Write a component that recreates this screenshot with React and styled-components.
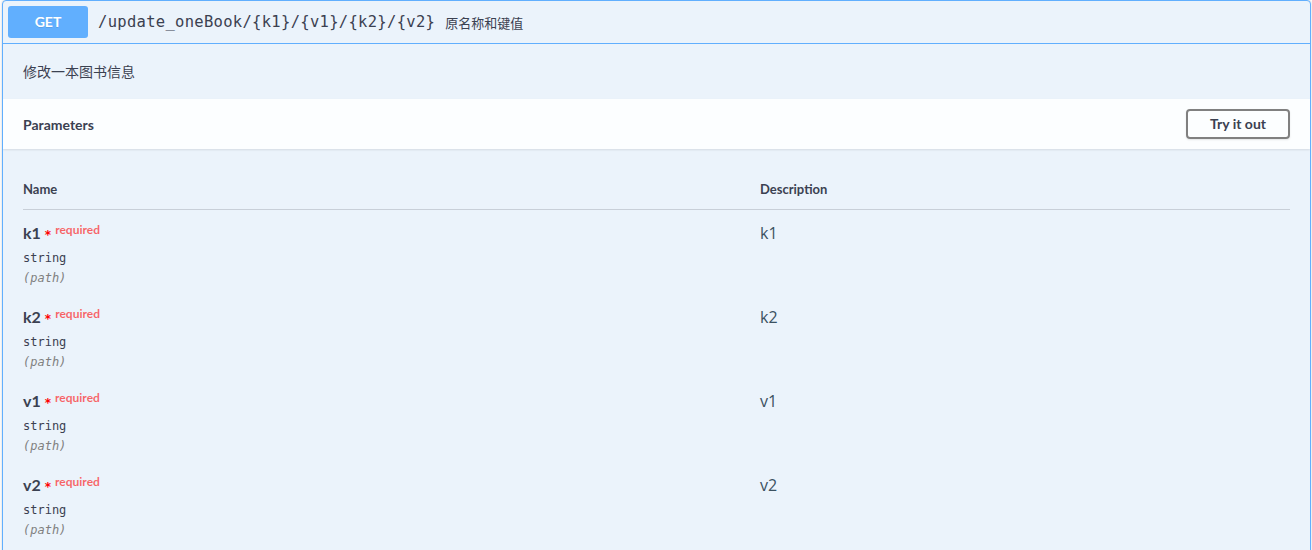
import React from 'react';
import styled, { createGlobalStyle } from 'styled-components';

const GlobalStyle = createGlobalStyle`
  body {
    margin: 0;
    background: #fff;
    font-family: "Open Sans", "Noto Sans CJK SC", sans-serif;
    color: #3b4151;
  }
`;

const Page = styled.div`
  padding: 0 1px 0 2px;
`;

const OpBlock = styled.div`
  border: 1px solid #61affe;
  border-radius: 4px;
  background: #ebf3fb;
  box-shadow: 0 0 3px rgba(0, 0, 0, 0.19);
  height: 560px;
  overflow: hidden;
`;

const Summary = styled.div`
  display: flex;
  align-items: center;
  padding: 5px;
  border-bottom: 1px solid #61affe;
`;

const Method = styled.span`
  min-width: 80px;
  box-sizing: border-box;
  padding: 6px 15px;
  border-radius: 3px;
  background: #61affe;
  color: #fff;
  font-family: Lato, "Noto Sans", sans-serif;
  font-size: 14px;
  font-weight: 700;
  line-height: 20px;
  text-align: center;
  text-shadow: 0 1px 0 rgba(0, 0, 0, 0.1);
`;

const Path = styled.span`
  padding: 0 10px;
  font-family: "DejaVu Sans Mono", monospace;
  font-size: 15.5px;
  letter-spacing: 0.3px;
  font-weight: 400;
  color: #3b4151;
`;

const SummaryText = styled.span`
  font-family: "Noto Sans CJK SC", sans-serif;
  font-size: 13px;
  color: #3b4151;
`;

const Description = styled.div`
  padding: 15px 20px;
  min-height: 25px;
  font-family: "Noto Sans CJK SC", sans-serif;
  font-size: 14px;
  line-height: 25px;
`;

const SectionHeader = styled.div`
  display: flex;
  align-items: center;
  justify-content: space-between;
  min-height: 50px;
  box-sizing: border-box;
  padding: 8px 20px;
  background: rgba(255, 255, 255, 0.85);
  box-shadow: 0 1px 2px rgba(0, 0, 0, 0.1);
`;

const SectionTitle = styled.h4`
  margin: 0;
  font-family: Lato, "Noto Sans", sans-serif;
  font-size: 14px;
  font-weight: 700;
  color: #3b4151;
`;

const TryButton = styled.button`
  padding: 4px 22px;
  border: 2px solid #808080;
  border-radius: 4px;
  background: transparent;
  font-family: Lato, "Noto Sans", sans-serif;
  font-size: 14px;
  font-weight: 700;
  line-height: 18px;
  color: #3b4151;
  box-shadow: 0 1px 2px rgba(0, 0, 0, 0.1);
`;

const TableWrap = styled.div`
  padding: 20px;
`;

const Grid = styled.div`
  display: grid;
  grid-template-columns: 737px 1fr;
`;

const HeadCell = styled.div`
  padding: 12px 0;
  border-bottom: 1px solid rgba(59, 65, 81, 0.2);
  font-family: Lato, "Noto Sans", sans-serif;
  font-size: 13px;
  font-weight: 700;
  line-height: 16px;
  color: #3b4151;
`;

const Cell = styled.div`
  padding: 11px 0 8px;
`;

const ParamName = styled.div`
  height: 24px;
  font-family: Lato, "Noto Sans", sans-serif;
  font-size: 16px;
  font-weight: 700;
  line-height: 24px;
  color: #3b4151;
`;

const Star = styled.span`
  margin-left: 4px;
  color: red;
  font-family: "DejaVu Sans", sans-serif;
  font-size: 12px;
  line-height: 1;
`;

const Required = styled.span`
  position: relative;
  top: -5px;
  padding-left: 4px;
  color: rgba(255, 0, 0, 0.6);
  font-size: 12px;
  font-weight: 700;
  line-height: 1;
`;

const Mono = styled.div`
  margin-top: ${p => (p.muted ? '4px' : '5px')};
  font-family: "DejaVu Sans Mono", monospace;
  font-size: 12px;
  line-height: 16px;
  color: ${p => (p.muted ? '#808080' : '#3b4151')};
  font-style: ${p => (p.muted ? 'italic' : 'normal')};
`;

const ParamDesc = styled.div`
  font-family: "Open Sans", sans-serif;
  font-size: 16px;
  line-height: 24px;
  color: #3b5160;
`;

const params = ['k1', 'k2', 'v1', 'v2'];

export default function App() {
  return (
    <Page>
      <GlobalStyle />
      <OpBlock>
        <Summary>
          <Method>GET</Method>
          <Path>/update_oneBook/{'{k1}'}/{'{v1}'}/{'{k2}'}/{'{v2}'}</Path>
          <SummaryText>原名称和键值</SummaryText>
        </Summary>
        <Description>修改一本图书信息</Description>
        <SectionHeader>
          <SectionTitle>Parameters</SectionTitle>
          <TryButton>Try it out</TryButton>
        </SectionHeader>
        <TableWrap>
          <Grid>
            <HeadCell>Name</HeadCell>
            <HeadCell>Description</HeadCell>
            {params.map(name => (
              <React.Fragment key={name}>
                <Cell>
                  <ParamName>
                    {name}
                    <Star>*</Star>
                    <Required>required</Required>
                  </ParamName>
                  <Mono>string</Mono>
                  <Mono muted>(path)</Mono>
                </Cell>
                <Cell>
                  <ParamDesc>{name}</ParamDesc>
                </Cell>
              </React.Fragment>
            ))}
          </Grid>
        </TableWrap>
      </OpBlock>
    </Page>
  );
}
